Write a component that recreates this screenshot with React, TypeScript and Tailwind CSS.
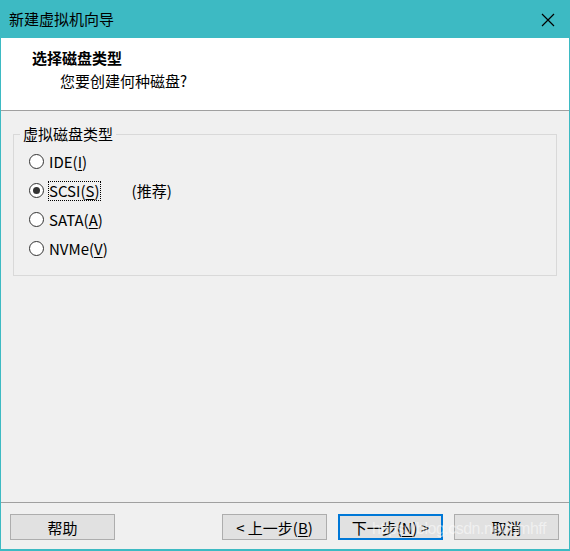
import React from "react";

const FONT = { fontFamily: '"Noto Sans CJK SC", "Noto Sans", sans-serif' };

function Radio({ checked }: { checked?: boolean }) {
  return (
    <span className="flex h-[15px] w-[15px] shrink-0 items-center justify-center rounded-full border border-[#333333] bg-white">
      {checked && <span className="h-[7px] w-[7px] rounded-full bg-[#333333]" />}
    </span>
  );
}

function Option({
  label,
  hotkey,
  checked,
  focused,
  extra,
}: {
  label: string;
  hotkey: string;
  checked?: boolean;
  focused?: boolean;
  extra?: string;
}) {
  return (
    <div className="flex h-[29px] items-center">
      <Radio checked={checked} />
      <span
        className={
          "ml-[4px] flex h-[20px] items-center px-[1px] text-[15px] leading-none text-black " +
          (focused ? "outline outline-1 outline-dotted outline-black -outline-offset-1" : "")
        }
      >
        {label}(<span className="underline underline-offset-2">{hotkey}</span>)
      </span>
      {extra && <span className="ml-[31px] text-[15px] leading-none text-black">{extra}</span>}
    </div>
  );
}

function Button({
  children,
  primary,
}: {
  children: React.ReactNode;
  primary?: boolean;
}) {
  return (
    <button
      className={
        "flex h-[26px] w-[105px] items-center justify-center bg-[#e1e1e1] text-[15px] leading-none text-black " +
        (primary ? "border-2 border-[#0078d7]" : "border border-[#adadad]")
      }
    >
      {children}
    </button>
  );
}

export default function App() {
  return (
    <div
      className="relative flex h-[551px] w-[570px] flex-col border-x border-b-2 border-[#3dbac3] bg-[#f0f0f0]"
      style={FONT}
    >
      {/* title bar */}
      <div className="flex h-[38px] shrink-0 items-center justify-between bg-[#3dbac3] pl-[8px] pr-[14px]">
        <span className="text-[15px] text-black">新建虚拟机向导</span>
        <svg width="14" height="14" viewBox="0 0 14 14" className="mt-[1px]">
          <path d="M1 1 L13 13 M13 1 L1 13" stroke="#000" strokeWidth="1.2" />
        </svg>
      </div>

      {/* header */}
      <div className="flex h-[73px] shrink-0 flex-col border-b border-[#a0a0a0] bg-white pl-[31px] pt-[10px]">
        <span className="text-[15px] font-bold leading-[20px] text-black">选择磁盘类型</span>
        <span className="ml-[28px] mt-[3px] text-[15px] leading-[20px] text-black">您要创建何种磁盘?</span>
      </div>

      {/* body */}
      <div className="flex flex-1 flex-col px-[12px] pt-[13px]">
        <fieldset className="h-[152px] w-[544px] border border-[#d9d9d9] pl-[6px] pt-[3px]">
          <legend className="px-[3px] text-[15px] leading-[20px] text-black">虚拟磁盘类型</legend>
          <div className="pl-[9px]">
            <Option label="IDE" hotkey="I" />
            <Option label="SCSI" hotkey="S" checked focused extra="(推荐)" />
            <Option label="SATA" hotkey="A" />
            <Option label="NVMe" hotkey="V" />
          </div>
        </fieldset>
      </div>

      {/* footer */}
      <div className="flex h-[47px] shrink-0 items-start border-t border-[#a0a0a0] px-[9px] pt-[11px]">
        <Button>帮助</Button>
        <div className="ml-auto flex gap-[11px] pr-[1px]">
          <Button>
            &lt; 上一步(<span className="underline underline-offset-2">B</span>)
          </Button>
          <Button primary>
            下一步(<span className="underline underline-offset-2">N</span>) &gt;
          </Button>
          <Button>取消</Button>
        </div>
      </div>

      {/* blog watermark */}
      <span
        className="pointer-events-none absolute left-[371px] top-[517px] text-[16px] tracking-[-0.5px] text-white/50"
        style={{ fontFamily: '"Liberation Sans", sans-serif' }}
      >
        https://blog.csdn.net/qmhff
      </span>
    </div>
  );
}
